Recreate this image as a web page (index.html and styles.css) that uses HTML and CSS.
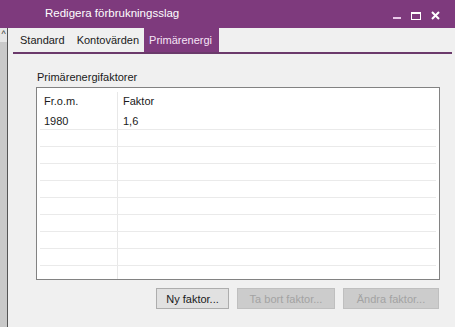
FILE: index.html
```html
<!DOCTYPE html>
<html lang="sv">
<head>
  <meta charset="UTF-8" />
  <title>Redigera förbrukningsslag</title>
  <link rel="stylesheet" href="styles.css">
</head>
<body>
  <div class="window">
    <div class="titlebar">
      <span class="title">Redigera förbrukningsslag</span>
      <div class="controls">
        <span class="ctl min"></span>
        <span class="ctl max"></span>
        <svg class="ctl close" width="9" height="9" viewBox="0 0 9 9">
          <path d="M1 1 L8 8 M8 1 L1 8" stroke="#fff" stroke-width="2"/>
        </svg>
      </div>
    </div>

    <div class="frame">
      <div class="side">
        <div class="side-arrow">&#94;</div>
      </div>
      <div class="content">
        <div class="tabs">
          <div class="tab">Standard</div>
          <div class="tab">Kontovärden</div>
          <div class="tab active">Primärenergi</div>
        </div>

        <div class="page">
          <div class="group-label">Primärenergifaktorer</div>
          <div class="listbox">
            <div class="row head">
              <div class="cell c1">Fr.o.m.</div>
              <div class="cell c2">Faktor</div>
            </div>
            <div class="row">
              <div class="cell c1">1980</div>
              <div class="cell c2">1,6</div>
            </div>
            <div class="row"><div class="cell c1"></div><div class="cell c2"></div></div>
            <div class="row"><div class="cell c1"></div><div class="cell c2"></div></div>
            <div class="row"><div class="cell c1"></div><div class="cell c2"></div></div>
            <div class="row"><div class="cell c1"></div><div class="cell c2"></div></div>
            <div class="row"><div class="cell c1"></div><div class="cell c2"></div></div>
            <div class="row"><div class="cell c1"></div><div class="cell c2"></div></div>
            <div class="row"><div class="cell c1"></div><div class="cell c2"></div></div>
            <div class="row"><div class="cell c1"></div><div class="cell c2"></div></div>
            <div class="row last"><div class="cell c1"></div><div class="cell c2"></div></div>
          </div>

          <div class="buttons">
            <button class="btn">Ny faktor...</button>
            <button class="btn disabled">Ta bort faktor...</button>
            <button class="btn disabled wide">Ändra faktor...</button>
          </div>
        </div>
      </div>
    </div>
  </div>
</body>
</html>
```

FILE: styles.css
```css
:root {
  --purple: #7e3a7d;
  --line: #6b3a6b;
  --bg: #f0f0f0;
  --text: #1a1a1a;
}
* {
  margin: 0;
  padding: 0;
  box-sizing: border-box;
}
body {
  font-family: "Liberation Sans", Arial, sans-serif;
  font-size: 11px;
  color: var(--text);
  background: var(--bg);
  width: 455px;
  height: 327px;
  overflow: hidden;
}
.window {
  display: flex;
  flex-direction: column;
  height: 327px;
}
.titlebar {
  height: 28px;
  background: var(--purple);
  display: flex;
  align-items: center;
  padding-left: 45px;
}
.title {
  color: #fff;
  font-size: 11.5px;
  flex: 1;
  margin-top: -2px;
}
.controls {
  display: flex;
  align-items: flex-end;
  gap: 10px;
  margin-right: 15px;
  margin-top: 2px;
}
.ctl.min {
  width: 8px;
  height: 2px;
  background: #e8c8e8;
  margin-bottom: 1px;
}
.ctl.max {
  width: 10px;
  height: 8px;
  border: 1px solid #fff;
  border-top-width: 2px;
}
.frame {
  flex: 1;
  display: flex;
}
.side {
  width: 8px;
  background: #c9c9c9;
  border-right: 1px solid #555;
}
.side-arrow {
  background: #e6e6e6;
  height: 14px;
  width: 7px;
  font-size: 9px;
  line-height: 12px;
  color: #333;
  text-align: center;
}
.content {
  flex: 1;
  display: flex;
  flex-direction: column;
}
.tabs {
  display: flex;
  height: 26px;
  margin-left: 5px;
  margin-right: 3px;
  border-bottom: 2px solid var(--line);
  font-size: 11px;
}
.tab {
  padding: 0 5px 0 7px;
  line-height: 25px;
  height: 24px;
}
.tab.active {
  background: var(--purple);
  color: #f6e4f6;
  padding: 0 7px 0 5px;
}
.page {
  padding: 16px 15px 0 28px;
}
.group-label {
  font-size: 11px;
  line-height: 14px;
  margin-left: 1px;
  margin-bottom: 3px;
}
.listbox {
  background: #fff;
  border: 1px solid #828282;
  height: 193px;
  padding: 4px 3px 0 3px;
  overflow: hidden;
}
.row {
  display: flex;
  height: 17px;
  border-bottom: 1px solid #eaeaea;
}
.row.head {
  height: 21px;
  border-bottom: none;
}
.row.last {
  border-bottom: none;
}
.cell {
  line-height: 17px;
  padding-left: 4px;
}
.row.head .cell {
  line-height: 18px;
}
.c1 {
  width: 78px;
  border-right: 1px solid #e8e8e8;
}
.c2 {
  flex: 1;
  padding-left: 5px;
}
.buttons {
  display: flex;
  justify-content: flex-end;
  gap: 8px;
  margin-top: 8px;
  margin-right: 1px;
}
.btn {
  font-family: inherit;
  font-size: 11px;
  height: 21px;
  width: 73px;
  background: #e1e1e1;
  border: 1px solid #adadad;
  color: var(--text);
}
.btn.disabled {
  background: #cccccc;
  border-color: #bfbfbf;
  color: #a3a3a3;
  width: 98px;
}
.btn.disabled.wide {
  width: 96px;
}
```
